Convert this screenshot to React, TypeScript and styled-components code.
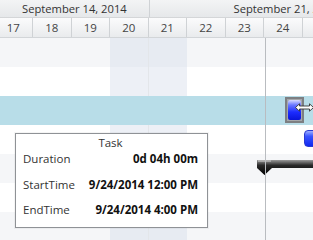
import React from "react";
import styled, { createGlobalStyle } from "styled-components";

const COL = 38.5;
const ROW = 29;

const GlobalStyle = createGlobalStyle`
  html, body {
    margin: 0;
    padding: 0;
    background: #ffffff;
  }
  body {
    font-family: "Open Sans", "Noto Sans", sans-serif;
  }
`;

const days = [17, 18, 19, 20, 21, 22, 23, 24, 25];
const weekend = [20, 21];

type RowKind = "alt" | "plain" | "selected";
const rows: RowKind[] = ["alt", "plain", "selected", "plain", "alt", "plain", "alt"];

const Gantt = styled.div`
  position: relative;
  width: 313px;
  height: 240px;
  overflow: hidden;
  background: #ffffff;
  font-size: 11px;
  color: #333;
`;

const WeekRow = styled.div`
  display: flex;
  height: 17px;
  background: linear-gradient(#f3f4f5, #e6e8ea);
  border-bottom: 1px solid #d4d6d8;
`;

const WeekCell = styled.div<{ $w: number; $pad: number }>`
  flex: 0 0 ${(p) => p.$w}px;
  box-sizing: border-box;
  padding-left: ${(p) => p.$pad}px;
  line-height: 17px;
  font-size: 11.2px;
  white-space: nowrap;
  overflow: hidden;
  border-right: 1px solid #cfd2d5;
  color: #333;
`;

const DayRow = styled.div`
  display: flex;
  height: 19px;
  margin-left: -5.5px;
  background: linear-gradient(#fbfbfc, #e9ebed);
  border-bottom: 1px solid #d2d5d8;
`;

const DayCell = styled.div`
  flex: 0 0 ${COL}px;
  box-sizing: border-box;
  text-align: center;
  line-height: 19px;
  font-size: 11.5px;
  border-right: 1px solid #cfd2d5;
  color: #444;
`;

const Body = styled.div`
  position: relative;
`;

const Row = styled.div<{ $kind: RowKind }>`
  position: relative;
  display: flex;
  height: ${ROW}px;
  margin-left: -5.5px;
  background: ${(p) =>
    p.$kind === "selected" ? "#b8dde8" : p.$kind === "alt" ? "#f5f6f8" : "#ffffff"};
`;

const Cell = styled.div<{ $weekend: boolean; $hidden: boolean; $edge: boolean }>`
  flex: 0 0 ${COL}px;
  box-sizing: border-box;
  background: ${(p) => (p.$weekend && !p.$hidden ? "rgba(214, 222, 234, 0.45)" : "transparent")};
  border-right: 1px solid ${(p) => (p.$edge && !p.$hidden ? "#e3e6ea" : "transparent")};
`;

const TodayLine = styled.div`
  position: absolute;
  left: 265px;
  top: 0;
  bottom: 0;
  width: 1px;
  background: #b9bcc0;
`;

const TaskBox = styled.div`
  position: absolute;
  left: 290.5px;
  top: 1px;
  width: 19px;
  height: 26px;
  box-sizing: border-box;
  border: 2px solid #7d7f82;
  background: #a5a7aa;
  padding: 1px;
`;

const TaskFill = styled.div`
  width: 100%;
  height: 100%;
  border-radius: 2px;
  background: linear-gradient(#d8dcff 0%, #6a78ff 25%, #1c2cff 60%, #0a14d8 100%);
`;

const Cursor = styled.svg`
  position: absolute;
  left: 300.5px;
  top: 7px;
`;

const NextBar = styled.div`
  position: absolute;
  left: 309.5px;
  top: 5px;
  width: 20px;
  height: 17px;
  border-radius: 4px;
  background: linear-gradient(#9fb0ff 0%, #3a55ff 35%, #1028f0 100%);
  border: 1px solid #2a3ad0;
  box-sizing: border-box;
`;

const Summary = styled.svg`
  position: absolute;
  left: 262.5px;
  top: 6px;
`;

const Tooltip = styled.div`
  position: absolute;
  left: 15px;
  top: 133px;
  width: 193px;
  box-sizing: border-box;
  background: #ffffff;
  border: 1px solid #8f9296;
  box-shadow: 0 0 0 1px rgba(0, 0, 0, 0.04);
  padding: 1px 9px 4px 7px;
  display: grid;
  grid-template-columns: auto 1fr;
  font-size: 11.5px;
`;

const TipTitle = styled.div`
  grid-column: 1 / 3;
  text-align: center;
  line-height: 16px;
  margin-bottom: -5px;
  color: #333;
`;

const TipLabel = styled.div`
  line-height: 25.5px;
  color: #333;
`;

const TipValue = styled.div`
  line-height: 25.5px;
  text-align: right;
  font-weight: 700;
  color: #111;
  white-space: nowrap;
`;

const tipRows = [
  ["Duration", "0d 04h 00m"],
  ["StartTime", "9/24/2014 12:00 PM"],
  ["EndTime", "9/24/2014 4:00 PM"],
];

export default function App() {
  return (
    <>
      <GlobalStyle />
      <Gantt>
        <WeekRow>
          <WeekCell $w={149.5} $pad={22}>September 14, 2014</WeekCell>
          <WeekCell $w={270} $pad={84}>September 21, 2014</WeekCell>
        </WeekRow>
        <DayRow>
          {days.map((d) => (
            <DayCell key={d}>{d}</DayCell>
          ))}
        </DayRow>
        <Body>
          {rows.map((kind, i) => (
            <Row key={i} $kind={kind}>
              {days.map((d) => (
                <Cell
                  key={d}
                  $weekend={weekend.includes(d)}
                  $hidden={kind === "selected"}
                  $edge={d === 20}
                />
              ))}
              {i === 2 && (
                <>
                  <TaskBox>
                    <TaskFill />
                  </TaskBox>
                  <Cursor width="19" height="9" viewBox="0 0 19 9">
                    <path
                      d="M0.5 4.5 L4.5 0.8 L4.5 3 L14.5 3 L14.5 0.8 L18.5 4.5 L14.5 8.2 L14.5 6 L4.5 6 L4.5 8.2 Z"
                      fill="#ffffff"
                      stroke="#333"
                      strokeWidth="0.9"
                      strokeLinejoin="round"
                    />
                  </Cursor>
                </>
              )}
              {i === 3 && <NextBar />}
              {i === 4 && (
                <Summary width="60" height="16" viewBox="0 0 60 16">
                  <defs>
                    <linearGradient id="sum" x1="0" y1="0" x2="0" y2="1">
                      <stop offset="0" stopColor="#9a9a9a" />
                      <stop offset="0.35" stopColor="#2a2a2a" />
                      <stop offset="1" stopColor="#000000" />
                    </linearGradient>
                  </defs>
                  <path d="M0 0 H60 V8 H15 L7.5 15 L0 8 Z" fill="url(#sum)" />
                  <path d="M1 1 H14" stroke="#cfcfcf" strokeWidth="1" />
                </Summary>
              )}
            </Row>
          ))}
          <TodayLine />
        </Body>
        <Tooltip>
          <TipTitle>Task</TipTitle>
          {tipRows.map(([label, value]) => (
            <React.Fragment key={label}>
              <TipLabel>{label}</TipLabel>
              <TipValue>{value}</TipValue>
            </React.Fragment>
          ))}
        </Tooltip>
      </Gantt>
    </>
  );
}
